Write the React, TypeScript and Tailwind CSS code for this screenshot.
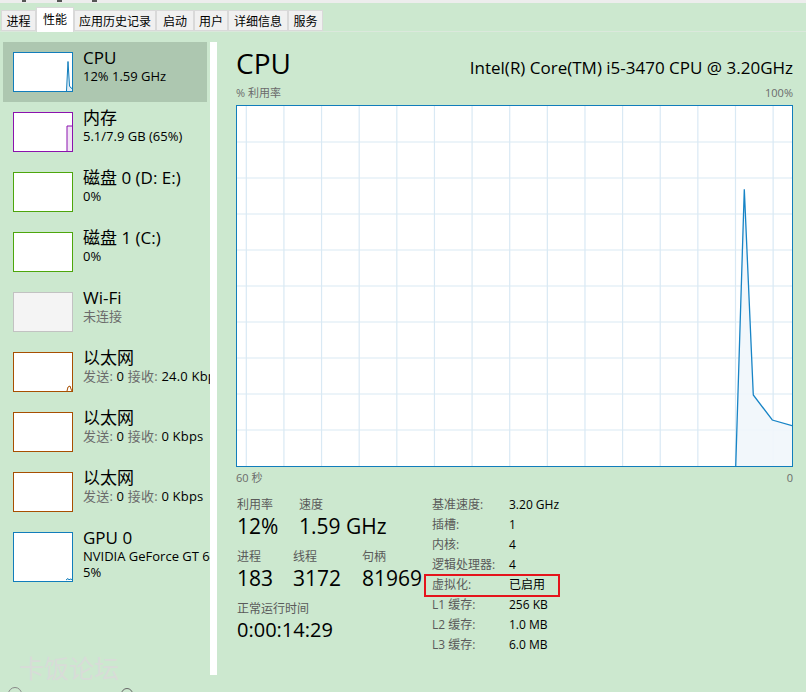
import React from 'react'

const font = "font-['Open_Sans','Noto_Sans_CJK_SC',sans-serif]"

type Item = {
  title: string
  sub?: React.ReactNode
  third?: string
  color: string
  bg?: string
  tall?: boolean
  selected?: boolean
  graph?: React.ReactNode
}

function Thumb({ color, bg, tall, graph }: { color: string; bg?: string; tall?: boolean; graph?: React.ReactNode }) {
  const h = tall ? 48 : 38
  return (
    <div
      className={`shrink-0 border ${tall ? 'h-[50px]' : 'h-[40px]'} w-[60px]`}
      style={{ borderColor: color, backgroundColor: bg ?? '#ffffff' }}
    >
      <svg width="58" height={h} viewBox={`0 0 58 ${h}`} className="block">
        {graph}
      </svg>
    </div>
  )
}

function Net({ rx }: { rx: string }) {
  return (
    <span className="tracking-[0.2px]">
      <span className="text-[#6b6b6b]">发送: </span>0 <span className="text-[#6b6b6b]">接收: </span>{rx}
    </span>
  )
}

const items: Item[] = [
  {
    title: 'CPU',
    sub: '12% 1.59 GHz',
    color: '#117dbb',
    selected: true,
    graph: (
      <>
        <polygon points="52.5,38 54,8.5 55.5,33 57,35 58,35.5 58,38" fill="#e3eff7" />
        <polyline points="52.5,38 54,8.5 55.5,33 57,35 58,35.5" fill="none" stroke="#117dbb" strokeWidth="1" />
      </>
    ),
  },
  {
    title: '内存',
    sub: '5.1/7.9 GB (65%)',
    color: '#8b12ae',
    graph: (
      <>
        <rect x="53" y="13" width="5" height="25" fill="#f1e5f5" />
        <polyline points="53,38 53,13 58,13" fill="none" stroke="#8b12ae" strokeWidth="1" />
      </>
    ),
  },
  { title: '磁盘 0 (D: E:)', sub: '0%', color: '#4da60c' },
  { title: '磁盘 1 (C:)', sub: '0%', color: '#4da60c' },
  {
    title: 'Wi-Fi',
    sub: <span className="text-[#6b6b6b]">未连接</span>,
    color: '#c2c2c2',
    bg: '#f4f4f4',
  },
  {
    title: '以太网',
    sub: <Net rx="24.0 Kbps" />,
    color: '#a74f01',
    graph: <polyline points="53,38 54,34 56,33 57,36 58,38" fill="none" stroke="#a74f01" strokeWidth="1" />,
  },
  { title: '以太网', sub: <Net rx="0 Kbps" />, color: '#a74f01' },
  { title: '以太网', sub: <Net rx="0 Kbps" />, color: '#a74f01' },
  {
    title: 'GPU 0',
    sub: 'NVIDIA GeForce GT 640',
    third: '5%',
    color: '#117dbb',
    tall: true,
    graph: <polyline points="52,47 54,45.5 55,47 56,46 58,46.5" fill="none" stroke="#117dbb" strokeWidth="1" />,
  },
]

const tabs = [
  { t: '进程', w: 'w-[35px]' },
  { t: '性能', w: 'w-[38px]', active: true },
  { t: '应用历史记录', w: 'w-[82px]' },
  { t: '启动', w: 'w-[38px]' },
  { t: '用户', w: 'w-[34px]' },
  { t: '详细信息', w: 'w-[60px]' },
  { t: '服务', w: 'w-[35px]' },
]

const specs = [
  ['基准速度:', '3.20 GHz'],
  ['插槽:', '1'],
  ['内核:', '4'],
  ['逻辑处理器:', '4'],
  ['虚拟化:', '已启用'],
  ['L1 缓存:', '256 KB'],
  ['L2 缓存:', '1.0 MB'],
  ['L3 缓存:', '6.0 MB'],
]

function Chart() {
  const W = 555
  const H = 360
  const vx: number[] = []
  for (let x = 9.3; x < W; x += 37.63) vx.push(x)
  const hy: number[] = []
  for (let y = 36; y < H; y += 36) hy.push(y)
  const pts = '498.7,361 507.3,83.3 516.3,289 535.3,314 555,319.7'
  return (
    <div className="h-[362px] w-[557px] border border-[#117dbb] bg-white">
      <svg width={W} height={H} viewBox={`0 0 ${W} ${H}`} className="block">
        {vx.map((x) => (
          <line key={'v' + x} x1={x} y1={0} x2={x} y2={H} stroke="#d9e9f4" strokeWidth="1.2" />
        ))}
        {hy.map((y) => (
          <line key={'h' + y} x1={0} y1={y} x2={W} y2={y} stroke="#d9e9f4" strokeWidth="1.2" />
        ))}
        <polygon points={`${pts} 555,361`} fill="#f1f6fb" fillOpacity="0.9" />
        <polyline points={pts} fill="none" stroke="#1784c6" strokeWidth="1.3" />
      </svg>
    </div>
  )
}

export default function App() {
  return (
    <div className={`relative h-[692px] w-[806px] overflow-hidden bg-[#cce8cf] text-black ${font}`}>
      {/* window top edge */}
      <div className="relative h-[3px] bg-[#ededed]">
        <span className="absolute left-[22px] top-0 h-[2px] w-[4px] bg-[#555]" />
        <span className="absolute left-[57px] top-0 h-[2px] w-[5px] bg-[#555]" />
        <span className="absolute left-[92px] top-0 h-[2px] w-[5px] bg-[#555]" />
      </div>

      {/* tabs */}
      <div className="flex h-[29px] items-end border-b border-[#dbe8dc] pl-[1px]">
        {tabs.map((tab) => (
          <div
            key={tab.t}
            className={`${tab.w} flex items-center justify-center border border-[#d9d9d9] font-['Noto_Sans_CJK_SC',sans-serif] text-[12px] ${
              tab.active ? 'mb-[-1px] h-[25px] border-b-0 bg-white pb-[2px]' : 'mb-0 h-[21px] bg-[#f0f0f0]'
            }`}
          >
            {tab.t}
          </div>
        ))}
      </div>

      <div className="flex">
        {/* sidebar */}
        <div className="w-[210px] shrink-0 overflow-hidden pt-[10px]">
          {items.map((it, i) => (
            <div
              key={i}
              className={`ml-[3px] flex h-[60px] w-[204px] gap-[10px] pl-[10px] ${it.selected ? 'bg-[#adc7b0]' : ''}`}
            >
              <div className="pt-[10px]">
                <Thumb color={it.color} bg={it.bg} tall={it.tall} graph={it.graph} />
              </div>
              <div className="whitespace-nowrap pt-[6px]">
                <div className="text-[17px] leading-[20px]">{it.title}</div>
                <div className="text-[13px] leading-[16px]">{it.sub}</div>
                {it.third && <div className="text-[13px] leading-[16px]">{it.third}</div>}
              </div>
            </div>
          ))}
        </div>

        {/* scrollbar */}
        <div className="mt-[10px] h-[633px] w-[7px] shrink-0 bg-white" />

        {/* main panel */}
        <div className="flex-1 pl-[19px] pr-[13px]">
          <div className="mt-[17px] flex items-baseline justify-between">
            <div className="text-[28px] leading-[28px]">CPU</div>
            <div className="text-[17px] leading-[20px]">Intel(R) Core(TM) i5-3470 CPU @ 3.20GHz</div>
          </div>
          <div className="mt-[7px] flex justify-between text-[11px] leading-[16px] text-[#6b6b6b]">
            <span>% 利用率</span>
            <span>100%</span>
          </div>
          <div className="mt-[4px]">
            <Chart />
          </div>
          <div className="mt-[3px] flex justify-between text-[11px] leading-[16px] text-[#6b6b6b]">
            <span>60 秒</span>
            <span>0</span>
          </div>

          <div className="mt-[9px] flex">
            <div className="w-[196px] pl-[1px] pt-[1px]">
              <div className="flex text-[12px] leading-[18px] text-[#5a5a5a]">
                <span className="w-[62px]">利用率</span>
                <span>速度</span>
              </div>
              <div className="flex text-[21px] leading-[24px]">
                <span className="w-[62px]">12%</span>
                <span>1.59 GHz</span>
              </div>
              <div className="mt-[10px] flex text-[12px] leading-[18px] text-[#5a5a5a]">
                <span className="w-[56px]">进程</span>
                <span className="w-[69px]">线程</span>
                <span>句柄</span>
              </div>
              <div className="flex text-[21px] leading-[24px]">
                <span className="w-[56px]">183</span>
                <span className="w-[69px]">3172</span>
                <span>81969</span>
              </div>
              <div className="mt-[10px] text-[12px] leading-[18px] text-[#5a5a5a]">正常运行时间</div>
              <div className="text-[20px] leading-[24px]">0:00:14:29</div>
            </div>

            <div className="text-[12px] leading-[20px]">
              {specs.map(([k, v]) => (
                <div key={k} className="relative flex">
                  <span className="w-[77px] text-[#5a5a5a]">{k}</span>
                  <span>{v}</span>
                  {k === '虚拟化:' && (
                    <div className="absolute left-[-8px] top-[-1px] h-[23px] w-[136px] border-2 border-[#e5141c]" />
                  )}
                </div>
              ))}
            </div>
          </div>
        </div>
      </div>

      {/* watermark */}
      <div className="absolute left-[19px] top-[651px] font-['Noto_Sans_CJK_SC',sans-serif] text-[25px] leading-[32px] text-[#d8dcd8]">
        卡饭论坛
      </div>
      <div className="absolute left-[8px] top-[687px] h-[14px] w-[14px] rounded-full border border-[#888]" />
      <div className="absolute left-[121px] top-[688px] h-[12px] w-[12px] rounded-full border border-[#666]" />
    </div>
  )
}
